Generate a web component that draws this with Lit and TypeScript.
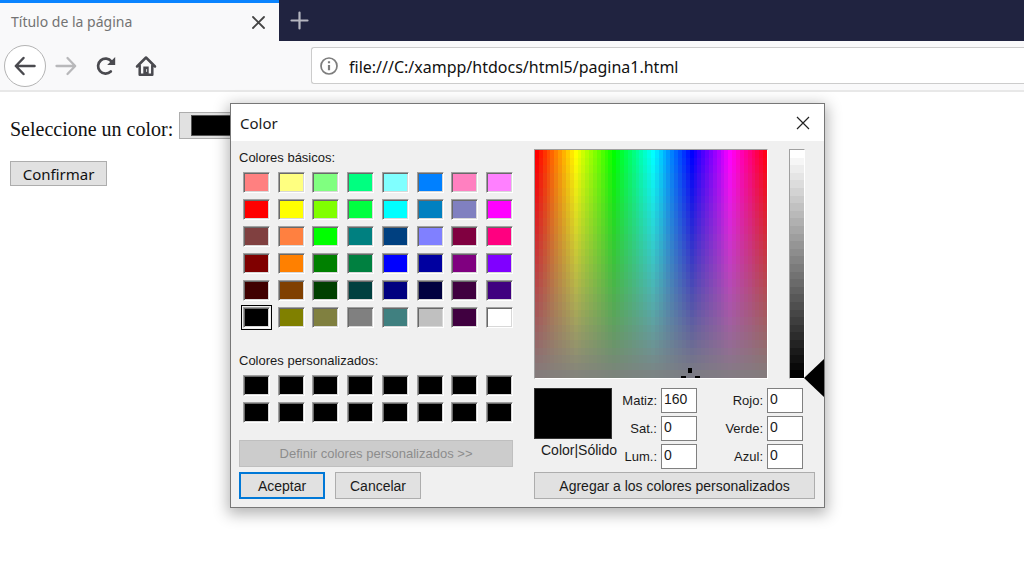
import { LitElement, html, css, svg } from "lit";
import { customElement } from "lit/decorators.js";
import { styleMap } from "lit/directives/style-map.js";

const BASIC_COLORS = [
  "#ff8080", "#ffff80", "#80ff80", "#00ff80", "#80ffff", "#0080ff", "#ff80c0", "#ff80ff",
  "#ff0000", "#ffff00", "#80ff00", "#00ff40", "#00ffff", "#0080c0", "#8080c0", "#ff00ff",
  "#804040", "#ff8040", "#00ff00", "#008080", "#004080", "#8080ff", "#800040", "#ff0080",
  "#800000", "#ff8000", "#008000", "#008040", "#0000ff", "#0000a0", "#800080", "#8000ff",
  "#400000", "#804000", "#004000", "#004040", "#000080", "#000040", "#400040", "#400080",
  "#000000", "#808000", "#808040", "#808080", "#408080", "#c0c0c0", "#400040", "#ffffff",
];
const CUSTOM_COLORS: string[] = Array(16).fill("#000000");
const HUE_STEPS = 60;
const SHADE_STEPS = 30;
const steps = (n: number) => Array.from({ length: n }, (_, i) => i);

@customElement("color-dialog")
class ColorDialog extends LitElement {
  static styles = css`
    :host {
      display: block;
      box-sizing: border-box;
      border: 1px solid #777;
      background: #f0f0f0;
      box-shadow: 0 4px 14px 2px rgba(0, 0, 0, 0.3);
      font: 13px/16px "Liberation Sans", Arial, sans-serif;
      color: #1a1a1a;
    }
    * { box-sizing: border-box; }
    .title {
      display: flex;
      align-items: center;
      justify-content: space-between;
      height: 37px;
      padding: 0 14px 0 9px;
      background: #fff;
    }
    .title h1 { margin: 0; font: 15px/20px "Noto Sans", "Open Sans", sans-serif; }
    .close { display: flex; padding: 0; border: 0; background: none; }
    .body {
      display: grid;
      grid-template-columns: 274px 281px;
      column-gap: 21px;
      padding: 8px 9px 8px 8px;
    }
    .column { display: flex; flex-direction: column; }
    .palettes { padding-top: 1px; }
    h2 { margin: 0; font: inherit; }
    .swatches {
      display: grid;
      grid-template-columns: repeat(8, 27px);
      justify-content: space-between;
      row-gap: 6px;
      padding: 6px 0 0 4px;
    }
    .custom { padding-bottom: 17px; }
    .basic { padding-bottom: 25px; }
    .swatch {
      height: 21px;
      padding: 0;
      border: 1px solid;
      border-color: #a0a0a0 #fff #fff #a0a0a0;
      box-shadow: inset 1px 1px #696969, inset -1px -1px #d8d8d8;
    }
    .swatch.selected { outline: 1px solid #000; outline-offset: 1px; }
    .button {
      height: 27px;
      padding: 0;
      border: 1px solid #adadad;
      background: #e1e1e1;
      font: 14px/16px "Liberation Sans", Arial, sans-serif;
      color: #1a1a1a;
    }
    .button:disabled { border-color: #bfbfbf; background: #ccc; font-size: 13px; color: #8c8c8c; }
    .primary { border: 2px solid #0078d7; }
    .actions { display: grid; grid-template-columns: 86px 86px; gap: 10px; padding-top: 5px; }
    .graphs { display: flex; gap: 21px; }
    .spectrum, .lum {
      position: relative;
      height: 230px;
      border: 1px solid;
      border-color: #a0a0a0 #fff #fff #a0a0a0;
    }
    .spectrum { width: 234px; }
    .lum { width: 16px; }
    .fill { display: block; width: 100%; height: 100%; }
    .cross { position: absolute; right: 67px; bottom: 0; }
    .arrow { position: absolute; right: -20px; bottom: -19px; }
    .values {
      display: grid;
      grid-template-columns: 78px 45px 40px 66px 40px;
      justify-content: start;
      padding: 9px 0 3px;
    }
    .preview { white-space: nowrap; font-size: 14px; }
    .chip { height: 51px; margin-bottom: 3px; background: #000; border: 1px solid #333; }
    .preview span { padding-left: 7px; }
    .group { display: grid; row-gap: 3px; align-content: start; }
    .group label { line-height: 25px; text-align: right; }
    .group input {
      width: 36px;
      height: 25px;
      padding: 0 2px 3px;
      border: 1px solid #808080;
      background: #fff;
      font: 14px/20px "Liberation Sans", Arial, sans-serif;
      color: #1a1a1a;
      border-radius: 0;
    }
    .group.fields { padding-left: 4px; }
  `;

  private swatches(colors: string[], kind: string, selected = -1) {
    return html`<div class="swatches ${kind}">
      ${colors.map((c, i) => html`<button
        class="swatch ${i === selected ? "selected" : ""}"
        aria-label=${c}
        style=${styleMap({ backgroundColor: c })}
      ></button>`)}
    </div>`;
  }

  private labels(items: string[][]) {
    return html`<div class="group">
      ${items.map(([id, text]) => html`<label for=${id}>${text}</label>`)}
    </div>`;
  }

  private fields(items: string[][]) {
    return html`<div class="group fields">
      ${items.map(([id, , value]) => html`<input id=${id} type="text" .value=${value} />`)}
    </div>`;
  }

  render() {
    const hsl = [["hue", "Matiz:", "160"], ["sat", "Sat.:", "0"], ["lum", "Lum.:", "0"]];
    const rgb = [["red", "Rojo:", "0"], ["green", "Verde:", "0"], ["blue", "Azul:", "0"]];
    return html`
      <div class="title">
        <h1>Color</h1>
        <button class="close" aria-label="Cerrar">
          <svg width="14" height="14" viewBox="0 0 14 14" stroke="#222" stroke-width="1.2">
            <path d="M1 1 13 13M13 1 1 13" />
          </svg>
        </button>
      </div>
      <div class="body">
        <div class="column palettes">
          <h2>Colores básicos:</h2>
          ${this.swatches(BASIC_COLORS, "basic", 40)}
          <h2>Colores personalizados:</h2>
          ${this.swatches(CUSTOM_COLORS, "custom")}
          <button class="button" disabled>Definir colores personalizados &gt;&gt;</button>
          <div class="actions">
            <button class="button primary">Aceptar</button>
            <button class="button">Cancelar</button>
          </div>
        </div>
        <div class="column">
          <div class="graphs">
            <div class="spectrum">
              <svg class="fill" viewBox="0 0 ${HUE_STEPS} ${SHADE_STEPS}" preserveAspectRatio="none" shape-rendering="crispEdges">
                ${steps(SHADE_STEPS).map((y) => steps(HUE_STEPS).map((x) => svg`<rect
                  x=${x} y=${y} width="1" height="1"
                  fill="hsl(${(x * 360) / HUE_STEPS}, ${100 - (y * 100) / SHADE_STEPS}%, 50%)" />`))}
              </svg>
              <svg class="cross" width="20" height="10" viewBox="0 0 20 10" shape-rendering="crispEdges">
                <path d="M8 0h4v5H8zM1 8h5v2H1zM15 8h5v2h-5z" />
              </svg>
            </div>
            <div class="lum">
              <svg class="fill" viewBox="0 0 1 ${SHADE_STEPS}" preserveAspectRatio="none" shape-rendering="crispEdges">
                ${steps(SHADE_STEPS).map((y) => svg`<rect y=${y} width="1" height="1"
                  fill="hsl(0, 0%, ${100 - (y * 100) / (SHADE_STEPS - 1)}%)" />`)}
              </svg>
              <svg class="arrow" width="20" height="38" viewBox="0 0 20 38"><path d="M0 19 20 0v38z" /></svg>
            </div>
          </div>
          <div class="values">
            <div class="preview"><div class="chip"></div><span>Color|Sólido</span></div>
            ${this.labels(hsl)} ${this.fields(hsl)} ${this.labels(rgb)} ${this.fields(rgb)}
          </div>
          <button class="button">Agregar a los colores personalizados</button>
        </div>
      </div>
    `;
  }
}

@customElement("app-root")
class AppRoot extends LitElement {
  static styles = css`
    :host { display: block; position: relative; min-height: 100vh; overflow: hidden; background: #fff; }
    * { box-sizing: border-box; }
    button { padding: 0; border: 0; background: none; }
    svg { display: block; }
    .tabs { display: flex; height: 41px; background: #202340; }
    .tab {
      display: flex;
      align-items: center;
      justify-content: space-between;
      width: 279px;
      padding: 0 14px 0 11px;
      border-top: 3px solid #0a84ff;
      background: #f9f9fa;
      font: 14px/20px "Noto Sans", "Open Sans", sans-serif;
      color: #737373;
    }
    .new { padding: 0 11px; }
    .toolbar {
      display: flex;
      align-items: center;
      height: 51px;
      padding-left: 4px;
      border-bottom: 2px solid #e8e8e8;
      background: #f9f9fa;
    }
    .nav { display: flex; align-items: center; width: 307px; gap: 9px; }
    .back {
      display: grid;
      place-items: center;
      width: 42px;
      height: 42px;
      border: 1px solid #b4b4b4;
      border-radius: 50%;
      background: #fff;
    }
    .reload, .home { margin-left: 9px; }
    .address {
      display: flex;
      flex: 1;
      align-items: center;
      gap: 10px;
      height: 37px;
      padding-left: 7px;
      border: 1px solid #ccc;
      border-right: 0;
      border-radius: 3px 0 0 3px;
      background: #fff;
    }
    .address input {
      flex: 1;
      min-width: 0;
      padding: 2px 0 0;
      border: 0;
      outline: 0;
      background: none;
      font: 16px/24px "Noto Sans", "Open Sans", sans-serif;
      color: #111;
    }
    .page { padding: 20px 10px; font: 20px/20px "Liberation Serif", serif; color: #111; }
    .row { display: flex; align-items: flex-end; gap: 6px; }
    .color {
      width: 76px;
      height: 27px;
      padding: 2px 11px;
      border: 1px solid #adadad;
      border-radius: 0;
      background: #e1e1e1;
      appearance: none;
    }
    .color::-webkit-color-swatch-wrapper { padding: 0; }
    .color::-webkit-color-swatch { border: 1px solid #555; border-radius: 0; }
    .confirm {
      width: 97px;
      height: 25px;
      margin-top: 22px;
      border: 1px solid #adadad;
      background: #e1e1e1;
      font: 15px/20px "Noto Sans", "Open Sans", sans-serif;
      color: #111;
    }
    .dialog { position: absolute; left: 230px; top: 103px; width: 595px; }
  `;

  render() {
    return html`
      <div class="tabs">
        <div class="tab">
          <span>Título de la página</span>
          <button aria-label="Cerrar pestaña">
            <svg width="13" height="13" viewBox="0 0 13 13" stroke="#444" stroke-width="1.8" stroke-linecap="round">
              <path d="M1 1 12 12M12 1 1 12" />
            </svg>
          </button>
        </div>
        <button class="new" aria-label="Nueva pestaña">
          <svg width="19" height="19" viewBox="0 0 19 19" stroke="#b5b6c0" stroke-width="2.200" stroke-linecap="round">
            <path d="M9.500 1.500V17.500M1.500 9.500H17.500" />
          </svg>
        </button>
      </div>
      <div class="toolbar">
        <div class="nav">
          <button class="back" aria-label="Atrás">
            <svg width="22" height="20" viewBox="0 0 22 20" fill="none" stroke="#4a4a4f" stroke-width="2.500" stroke-linecap="round" stroke-linejoin="round">
              <path d="M20.500 10H2M9.500 2 1.800 10l7.700 8" />
            </svg>
          </button>
          <button aria-label="Adelante">
            <svg width="22" height="20" viewBox="0 0 22 20" fill="none" stroke="#b8b8ba" stroke-width="2.300" stroke-linecap="round" stroke-linejoin="round">
              <path d="M1.500 10H20M12.500 2l7.700 8-7.700 8" />
            </svg>
          </button>
          <button class="reload" aria-label="Recargar">
            <svg width="22" height="20" viewBox="0 0 22 20" fill="none" stroke="#4a4a4f" stroke-width="2.700" stroke-linecap="round">
              <path d="M15.800 15.500A7.500 7.500 0 1 1 16.500 5.500" />
              <path d="M20.200 1V9H12.200z" fill="#4a4a4f" stroke="none" />
            </svg>
          </button>
          <button class="home" aria-label="Inicio">
            <svg width="22" height="22" viewBox="0 0 22 22" fill="none" stroke="#4a4a4f" stroke-width="2.500" stroke-linecap="round" stroke-linejoin="round">
              <path d="M2 11.500 11 2.500l9 9M4.700 10.500v9.300H17.300V10.500" />
              <path d="M8.300 19.500v-8h5.400v8z" fill="#4a4a4f" stroke="none" />
              <path d="M11.600 14.500v2" stroke="#ddd" stroke-width="1" />
            </svg>
          </button>
        </div>
        <div class="address">
          <svg width="20" height="20" viewBox="0 0 20 20" fill="none" stroke="#7d7d7d">
            <circle cx="10" cy="10" r="8" stroke-width="1.700" />
            <path d="M10 9v5.200M10 5.300v2" stroke-width="2.200" />
          </svg>
          <input type="text" aria-label="Dirección" .value=${"file:///C:/xampp/htdocs/html5/pagina1.html"} />
        </div>
      </div>
      <main class="page">
        <div class="row">
          <label for="pick">Seleccione un color:</label>
          <input class="color" id="pick" type="color" value="#000000" />
        </div>
        <button class="confirm">Confirmar</button>
      </main>
      <color-dialog class="dialog" role="dialog" aria-label="Color"></color-dialog>
    `;
  }
}
